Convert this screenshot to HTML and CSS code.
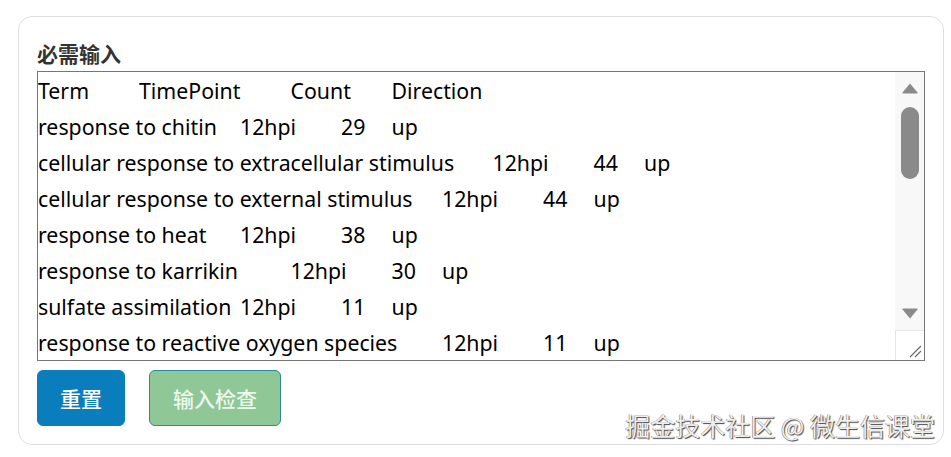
FILE: index.html
```html
<!DOCTYPE html>
<html lang="zh-CN">
<head>
<meta charset="utf-8">
<title>必需输入</title>
<link rel="stylesheet" href="styles.css">
</head>
<body>
<div class="card">
  <div class="label">必需输入</div>
  <div class="textbox">
    <div class="text">Term	TimePoint	Count	Direction
response to chitin	12hpi	29	up
cellular response to extracellular stimulus	12hpi	44	up
cellular response to external stimulus	12hpi	44	up
response to heat	12hpi	38	up
response to karrikin	12hpi	30	up
sulfate assimilation	12hpi	11	up
response to reactive oxygen species	12hpi	11	up
response to wounding	12hpi	27	up</div>
    <div class="scrollbar">
      <svg class="arrow" viewBox="0 0 18 12" width="18" height="12"><path d="M9 1.5 L16.5 10.5 Q17 11.5 16 11.5 L2 11.5 Q1 11.5 1.5 10.5 Z" fill="#8a8a8a"/></svg>
      <div class="thumb"></div>
      <div class="track"></div>
      <svg class="arrow" viewBox="0 0 18 12" width="18" height="12"><path d="M9 10.5 L16.5 1.5 Q17 0.5 16 0.5 L2 0.5 Q1 0.5 1.5 1.5 Z" fill="#8a8a8a"/></svg>
      <div class="resizer">
        <svg viewBox="0 0 28 29" width="28" height="29"><path d="M14 26 L25 15 M19 26 L25 20" stroke="#6a6a6a" stroke-width="1.2" fill="none"/></svg>
      </div>
    </div>
  </div>
  <div class="actions">
    <button class="btn btn-primary">重置</button>
    <button class="btn btn-check">输入检查</button>
  </div>
  <div class="watermark">掘金技术社区 @ 微生信课堂</div>
</div>
</body>
</html>
```

FILE: styles.css
```css
html, body {
  margin: 0;
  padding: 0;
  background: #ffffff;
}

body {
  font-family: "Noto Sans", "Noto Sans CJK SC", sans-serif;
  color: #000;
}

.card {
  position: relative;
  box-sizing: border-box;
  width: 926px;
  height: 429px;
  margin: 16px 0 0 18px;
  padding: 22px 18px 18px 18px;
  border: 1px solid #dedede;
  border-radius: 14px;
  display: flex;
  flex-direction: column;
}

.label {
  font-family: "Noto Sans CJK SC", sans-serif;
  font-weight: 700;
  font-size: 21px;
  line-height: 28px;
  height: 28px;
  color: #333333;
  margin-bottom: 4px;
  padding-left: 0;
}

.textbox {
  box-sizing: border-box;
  height: 290px;
  border: 1px solid #767676;
  display: flex;
  overflow: hidden;
}

.text {
  flex: 1;
  overflow: hidden;
  white-space: pre;
  tab-size: 50.5px;
  -moz-tab-size: 50.5px;
  font-family: "Noto Sans", sans-serif;
  font-size: 21.3px;
  line-height: 36px;
  padding-top: 1px;
  color: #000;
}

.scrollbar {
  width: 29px;
  background: #f8f8f8;
  display: flex;
  flex-direction: column;
  align-items: center;
  padding-top: 10px;
  box-sizing: border-box;
}

.arrow {
  display: block;
  flex: none;
}

.thumb {
  width: 18px;
  height: 72px;
  margin-top: 13px;
  border-radius: 9px;
  background: #8a8a8a;
  flex: none;
}

.track {
  flex: 1;
}

.scrollbar .arrow:last-of-type {
  margin-bottom: 10px;
}

.resizer {
  align-self: stretch;
  height: 29px;
  background: #ffffff;
  border-top: 1px solid #e6e6e6;
  border-left: 1px solid #e6e6e6;
  flex: none;
}

.resizer svg {
  display: block;
}

.actions {
  display: flex;
  gap: 24px;
  margin-top: 9px;
}

.btn {
  box-sizing: border-box;
  height: 56px;
  border-radius: 6px;
  font-family: "Noto Sans CJK SC", sans-serif;
  font-size: 21px;
  font-weight: 500;
  padding: 0;
  cursor: pointer;
}

.btn-primary {
  width: 88px;
  background: #0a7dbd;
  border: 1px solid #0a7dbd;
  color: #ffffff;
}

.btn-check {
  width: 132px;
  background: #8fc796;
  border: 1px solid #2b8a9c;
  color: #eef8ef;
}

.watermark {
  position: absolute;
  right: 8px;
  bottom: 1px;
  font-family: "Noto Sans CJK SC", sans-serif;
  font-size: 25px;
  color: #eeeeee;
  text-shadow: 1px 1px 1px #444, -0.5px -0.5px 0.5px #777;
  white-space: nowrap;
}
```
